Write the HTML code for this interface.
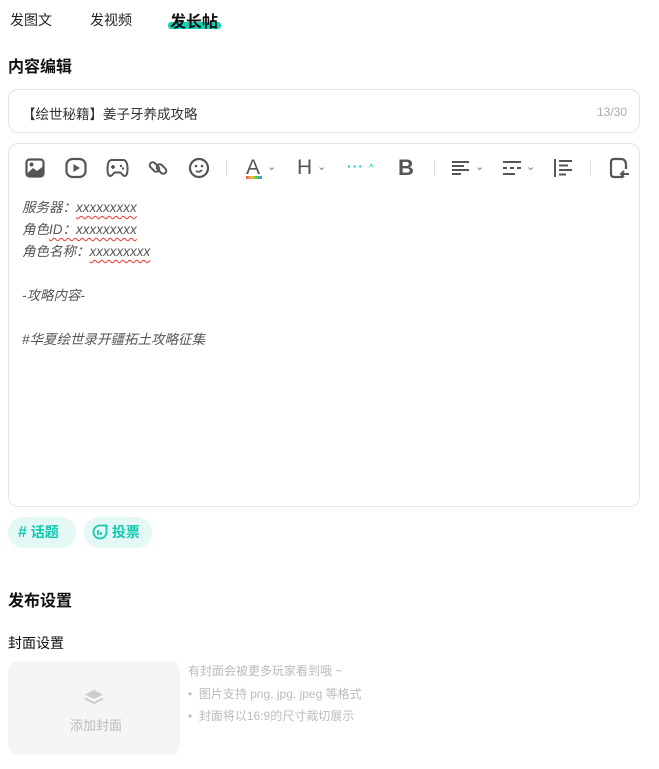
<!DOCTYPE html>
<html><head><meta charset="utf-8"><style>
*{margin:0;padding:0;box-sizing:border-box}
body{width:659px;height:769px;background:#fff;font-family:"Liberation Sans","Noto Sans CJK SC",sans-serif;color:#222;position:relative;overflow:hidden}
.a{position:absolute;white-space:nowrap}
.tab{font-size:14px;top:10px;color:#222}
.h{font-size:16px;font-weight:bold;color:#111}
.box{position:absolute;border:1px solid #e3e4e8;border-radius:10px}
.ed{font-size:13.5px;font-style:italic;color:#555;left:22px}
.wv{text-decoration:underline wavy #e33;text-underline-offset:3px;text-decoration-thickness:1px}
.pill{position:absolute;top:517px;height:31px;border-radius:16px;background:#e4f9f6;color:#13c8b0;font-size:14px;font-weight:bold;line-height:31px}
.g{color:#bbb;font-size:12px}
svg{position:absolute}
.sep{position:absolute;top:160px;width:1px;height:16px;background:#ddd}
</style></head><body>
<div class="a tab" style="left:10px">发图文</div>
<div class="a tab" style="left:90px">发视频</div>
<div class="a" style="left:168px;top:22px;width:53px;height:7px;background:#14d2b8;border-radius:3px"></div>
<div class="a tab" style="left:170px;top:8px;font-size:16px;font-weight:bold;color:#111">发长帖</div>
<div class="a h" style="left:8px;top:53px">内容编辑</div>
<div class="box" style="left:8px;top:89px;width:632px;height:44px"></div>
<div class="a" style="left:22px;top:103px;font-size:13.5px;color:#333">【绘世秘籍】姜子牙养成攻略</div>
<div class="a" style="left:597px;top:105px;font-size:12px;color:#aaa">13/30</div>
<div class="box" style="left:8px;top:143px;width:632px;height:364px"></div>
<!-- toolbar -->
<svg style="left:25px;top:158px" width="20" height="20" viewBox="0 0 20 20"><rect x="1.5" y="1.5" width="17" height="17" rx="3" fill="none" stroke="#555" stroke-width="2.2"/><circle cx="6.5" cy="6.5" r="2" fill="#555"/><path d="M1.5 16 L8 10 L12 13 L18.5 8 V18.5 H1.5Z" fill="#555"/></svg>
<svg style="left:65px;top:157px" width="22" height="22" viewBox="0 0 22 22"><rect x="1.5" y="2" width="19" height="18" rx="6" fill="none" stroke="#555" stroke-width="2.2"/><path d="M8.5 7 L15 11 L8.5 15Z" fill="#555"/></svg>
<svg style="left:106px;top:157px" width="23" height="22" viewBox="0 0 23 22"><path d="M6 3 H17 C20 3 21.5 6 21.5 12 C21.5 18 20 19 18.5 19 C16.5 19 15.5 15.5 14 15.5 H9 C7.5 15.5 6.5 19 4.5 19 C3 19 1.5 18 1.5 12 C1.5 6 3 3 6 3Z" fill="none" stroke="#555" stroke-width="2"/><path d="M7 8 V12 M5 10 H9" stroke="#555" stroke-width="1.8"/><circle cx="15" cy="9" r="1.2" fill="#555"/><circle cx="17" cy="11.5" r="1.2" fill="#555"/></svg>
<svg style="left:148px;top:158px" width="20" height="20" viewBox="0 0 20 20"><rect x="1" y="6" width="11" height="6" rx="3" transform="rotate(45 6.5 9)" fill="none" stroke="#555" stroke-width="2"/><rect x="8" y="8" width="11" height="6" rx="3" transform="rotate(45 13.5 11)" fill="none" stroke="#555" stroke-width="2"/></svg>
<svg style="left:188px;top:157px" width="22" height="22" viewBox="0 0 22 22"><circle cx="11" cy="11" r="9" fill="none" stroke="#555" stroke-width="2.2"/><circle cx="8" cy="9" r="1.3" fill="#555"/><circle cx="14" cy="9" r="1.3" fill="#555"/><path d="M8 14 Q11 16 14 13" fill="none" stroke="#555" stroke-width="1.8"/></svg>
<div class="sep" style="left:226px"></div>
<div class="a" style="left:246px;top:156px;font-size:21px;color:#555">A</div>
<div class="a" style="left:246px;top:176px;width:16px;height:3px;background:linear-gradient(90deg,#e55,#fb3,#5c5,#48f)"></div>
<div class="a" style="left:267px;top:160px;font-size:11px;color:#777">⌄</div>
<div class="a" style="left:297px;top:156px;font-size:21px;color:#555">H</div>
<div class="a" style="left:317px;top:160px;font-size:11px;color:#777">⌄</div>
<div class="a" style="left:347px;top:158px;font-size:14px;color:#14d2b8;letter-spacing:1px;font-weight:bold">···</div>
<div class="a" style="left:369px;top:163px;font-size:10px;color:#14d2b8">^</div>
<div class="a" style="left:398px;top:155px;font-size:22px;font-weight:bold;color:#555">B</div>
<div class="sep" style="left:434px"></div>
<svg style="left:452px;top:160px" width="20" height="16"><path d="M0 2H17M0 6H12M0 10H17M0 14H9" stroke="#555" stroke-width="2"/></svg>
<div class="a" style="left:475px;top:160px;font-size:11px;color:#777">⌄</div>
<svg style="left:503px;top:160px" width="20" height="16"><path d="M0 2H18M0 8H4M7 8H11M14 8H18M0 14H12" stroke="#555" stroke-width="2"/></svg>
<div class="a" style="left:526px;top:160px;font-size:11px;color:#777">⌄</div>
<svg style="left:554px;top:159px" width="20" height="18"><path d="M1 0V18M5 2H18M5 6.5H14M5 11H18M5 15.5H12" stroke="#555" stroke-width="2"/></svg>
<div class="sep" style="left:590px"></div>
<svg style="left:609px;top:157px" width="22" height="22" viewBox="0 0 22 22"><path d="M14 20 H5 C3 20 2 19 2 17 V5 C2 3 3 2 5 2 H12 C15 2 17 4 17 8 V12" fill="none" stroke="#555" stroke-width="2.2"/><path d="M20 17 H12 M15 14 L12 17 L15 20" fill="none" stroke="#555" stroke-width="2"/></svg>
<!-- content -->
<div class="a ed" style="top:196px">服务器：<span class="wv">xxxxxxxxx</span></div>
<div class="a ed" style="top:218px">角色<span class="wv">ID：xxxxxxxxx</span></div>
<div class="a ed" style="top:240px">角色名称：<span class="wv">xxxxxxxxx</span></div>
<div class="a ed" style="top:284px">-攻略内容-</div>
<div class="a ed" style="top:328px">#华夏绘世录开疆拓土攻略征集</div>
<div class="pill" style="left:8px;width:68px;padding-left:10px"><span style="font-size:16px">#</span> 话题</div>
<div class="pill" style="left:84px;width:68px;padding-left:8px"><svg style="position:relative;display:inline-block;vertical-align:-3px" width="16" height="16" viewBox="0 0 16 16"><path d="M8 1.5 A6.5 6.5 0 1 0 14.5 8 V1.5Z" fill="none" stroke="#13c8b0" stroke-width="1.8"/><path d="M6 6V11M9 8V11" stroke="#13c8b0" stroke-width="1.8"/></svg> 投票</div>
<div class="a h" style="left:8px;top:587px">发布设置</div>
<div class="a" style="left:8px;top:633px;font-size:14px;color:#111">封面设置</div>
<div class="a" style="left:8px;top:661px;width:172px;height:94px;background:#f4f5f7;border-radius:10px"></div>
<svg style="left:84px;top:689px" width="20" height="16" viewBox="0 0 20 16"><path d="M10 1 L19 5.5 L10 10 L1 5.5Z" fill="#ccc"/><path d="M1 9.5 L10 14 L19 9.5" fill="none" stroke="#ccc" stroke-width="2"/></svg>
<div class="a g" style="left:70px;top:715px;font-size:13px">添加封面</div>
<div class="a g" style="left:188px;top:662px">有封面会被更多玩家看到哦 ~</div>
<div class="a g" style="left:188px;top:685px">•&nbsp;&nbsp;图片支持 png, jpg, jpeg 等格式</div>
<div class="a g" style="left:188px;top:707px">•&nbsp;&nbsp;封面将以16:9的尺寸裁切展示</div>
</body></html>
